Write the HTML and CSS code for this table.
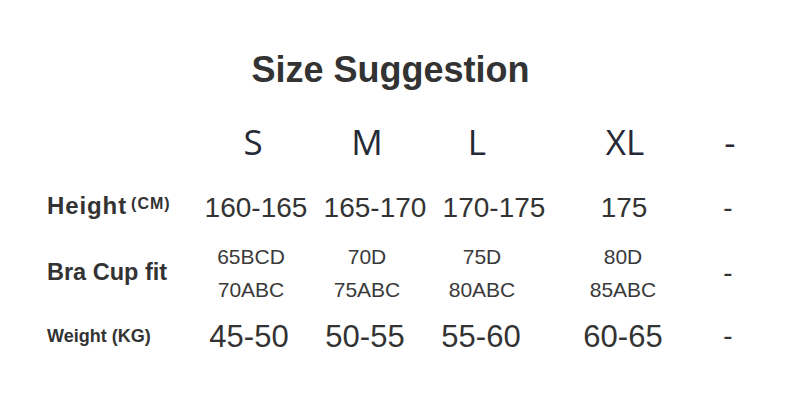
FILE: index.html
```html
<!DOCTYPE html>
<html>
<head>
<meta charset="utf-8">
<link rel="stylesheet" href="styles.css">
</head>
<body>
<div class="page">
  <h1 class="title">Size Suggestion</h1>
  <div class="table">
    <div class="label"></div>
    <div class="size c1">S</div>
    <div class="size c2">M</div>
    <div class="size c3">L</div>
    <div class="size c4">XL</div>
    <div class="size c4">-</div>

    <div class="label lbl-height">Height<span class="unit">(CM)</span></div>
    <div class="num h1">160-165</div>
    <div class="num h2">165-170</div>
    <div class="num h3">170-175</div>
    <div class="num h4">175</div>
    <div class="num">-</div>

    <div class="label lbl-bra">Bra Cup fit</div>
    <div class="cup"><span>65BCD</span><span>70ABC</span></div>
    <div class="cup"><span>70D</span><span>75ABC</span></div>
    <div class="cup"><span>75D</span><span>80ABC</span></div>
    <div class="cup"><span>80D</span><span>85ABC</span></div>
    <div class="num">-</div>

    <div class="label lbl-weight">Weight (KG)</div>
    <div class="num wt w1">45-50</div>
    <div class="num wt w1">50-55</div>
    <div class="num wt w3">55-60</div>
    <div class="num wt">60-65</div>
    <div class="num">-</div>
  </div>
</div>
</body>
</html>
```
FILE: styles.css
```css
html, body {
  margin: 0;
  padding: 0;
  background: #ffffff;
}
.page {
  width: 787px;
  height: 420px;
  font-family: "Liberation Sans", Arial, sans-serif;
  color: #333333;
}
.title {
  margin: 0;
  padding-top: 50px;
  padding-right: 6px;
  height: 40px;
  line-height: 40px;
  font-size: 36px;
  font-weight: bold;
  text-align: center;
  color: #333333;
}
.table {
  margin-top: 20px;
  display: grid;
  grid-template-columns: 144px 120px 112px 118px 164px 46px;
  grid-template-rows: 66px 64px 66px 60px;
  padding-left: 47px;
  align-items: center;
}
.label {
  font-weight: bold;
  color: #333333;
  line-height: 1;
  white-space: nowrap;
}
.size {
  font-family: "Open Sans", "Noto Sans", sans-serif;
  font-size: 35px;
  font-weight: 500;
  line-height: 1;
  color: #252935;
  text-align: center;
  white-space: nowrap;
  padding-bottom: 3px;
}
.size.c1 { margin-left: 2px; margin-right: -2px; }
.size.c3 { margin-left: -5px; margin-right: 5px; }
.size.c4 { margin-left: 2px; margin-right: -2px; }
.lbl-height {
  font-size: 24px;
  letter-spacing: 0.9px;
  padding-bottom: 4px;
}
.unit {
  font-size: 16px;
  letter-spacing: 1px;
  margin-left: 4px;
  vertical-align: 5px;
}
.lbl-bra {
  font-size: 23.5px;
}
.lbl-weight {
  font-size: 18px;
}
.num {
  font-size: 28px;
  line-height: 1;
  text-align: center;
  white-space: nowrap;
  color: #333333;
}
.num.h1 { margin-left: 5px; margin-right: -5px; }
.num.h2 { margin-left: 8px; margin-right: -8px; }
.num.h3 { margin-left: 12px; margin-right: -12px; }
.num.h4 { margin-left: 1px; margin-right: -1px; }
.num.wt {
  font-size: 31px;
}
.num.w1 { margin-left: -2px; margin-right: 2px; }
.num.w3 { margin-left: -1px; margin-right: 1px; }
.cup {
  display: flex;
  flex-direction: column;
  align-items: center;
  gap: 9px;
  font-size: 21px;
  line-height: 24px;
  color: #3a3a3a;
}
```
